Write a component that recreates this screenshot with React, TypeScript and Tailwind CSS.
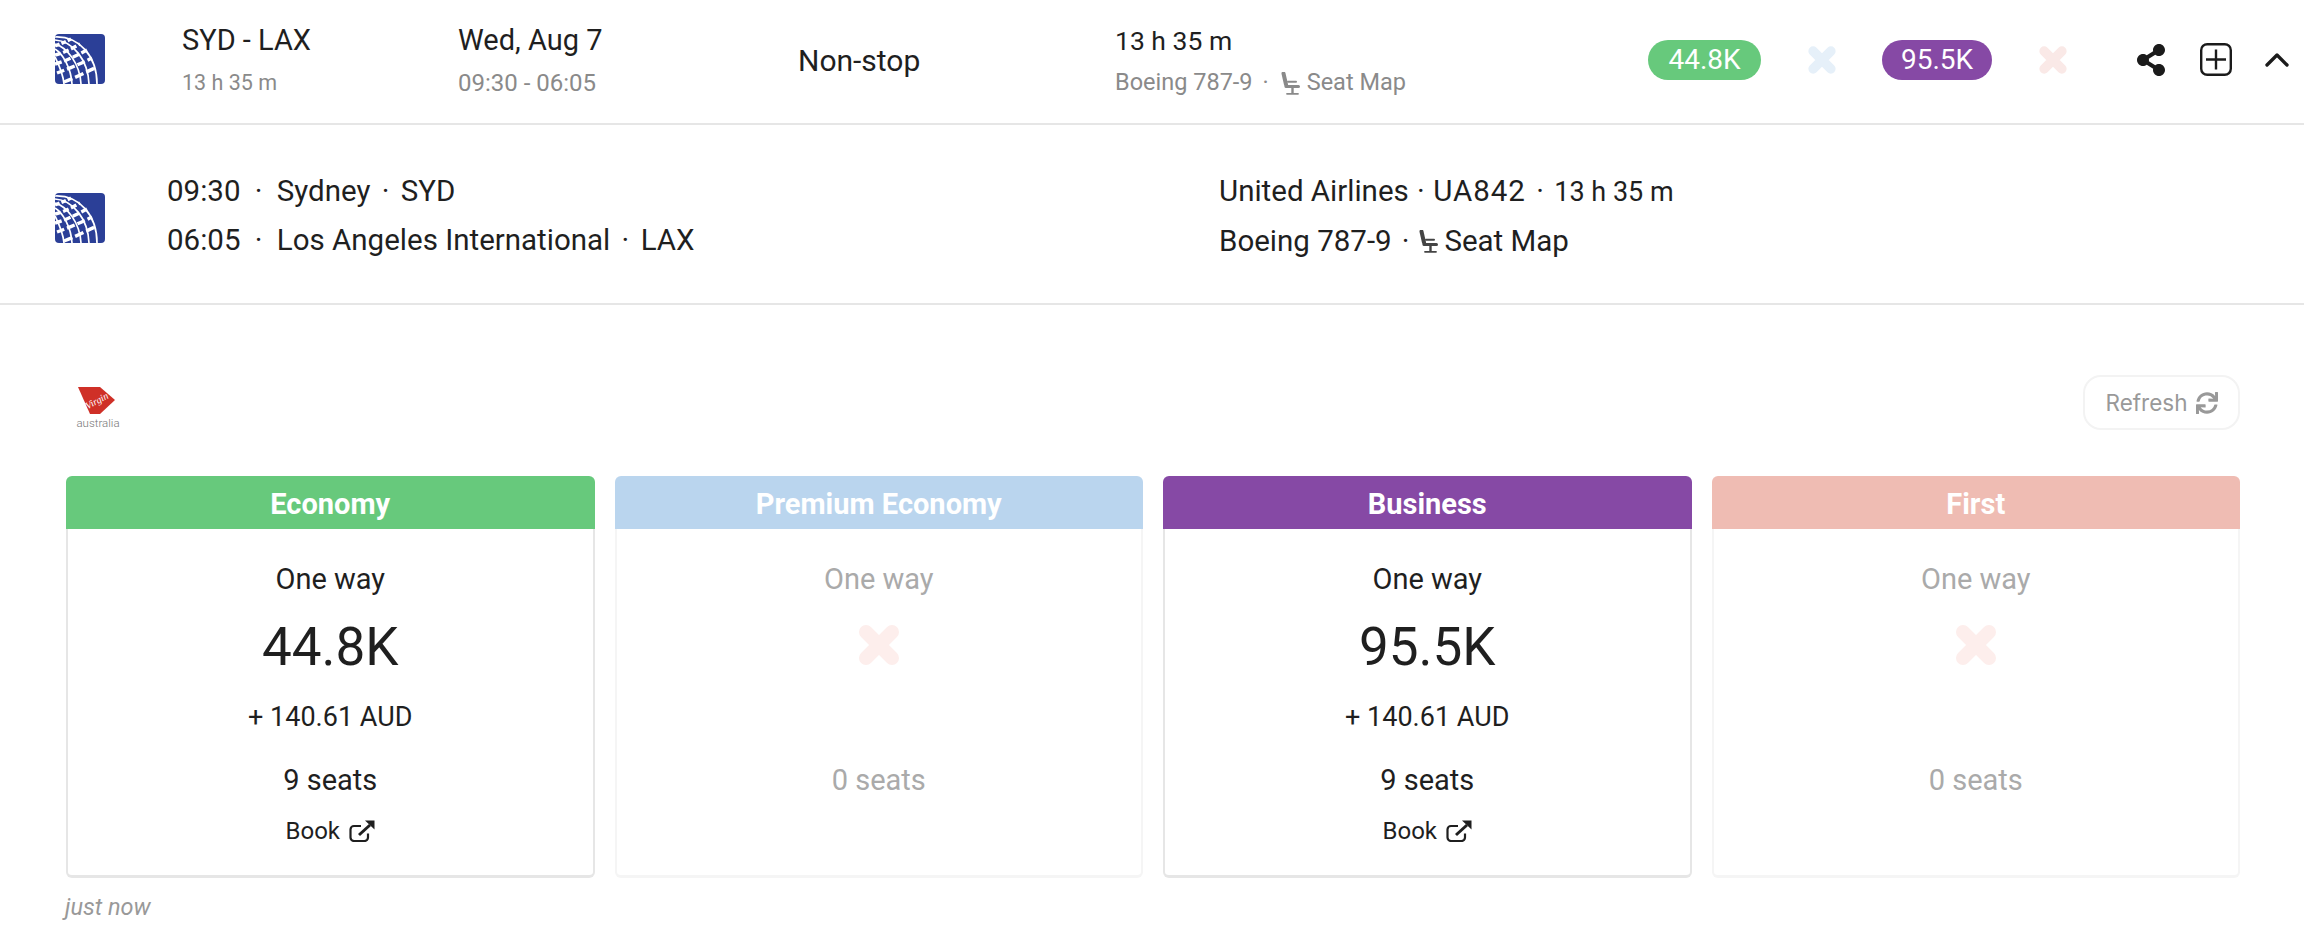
import React from "react";
import { FaShareAlt, FaSync } from "react-icons/fa";
import { FiChevronUp } from "react-icons/fi";

const font = "font-['Roboto',sans-serif]";

function UnitedLogo() {
  return (
    <svg width="50" height="50" viewBox="0 0 50 50" className="shrink-0">
      <defs>
        <clipPath id="ua"><rect width="50" height="50" rx="4" /></clipPath>
      </defs>
      <g clipPath="url(#ua)">
        <rect width="50" height="50" fill="#2b3f97" />
        <g fill="none" stroke="#fff" strokeWidth="1.7">
          <path d="M0 3C24 2 42 22 42 50" />
          <path d="M0 6C18 7 33 26 34 50" />
          <path d="M0 10C12 13 25 30 26 50" />
          <path d="M0 15C8 20 16 34 17 50" />
          <path d="M0 23C3 29 8 39 9 50" />
        </g>
        <g fill="none" stroke="#fff" strokeWidth="3.4">
          <path d="M0 12C5 10 10 8 16 5" strokeDasharray="5 2" />
          <path d="M0 21C9 19 18 14 25 10" strokeDasharray="6 2.5" />
          <path d="M0 30C11 27 23 21 32 16" strokeDasharray="7 2.5" />
          <path d="M2 39C13 35 27 29 37 24" strokeDasharray="8 3" />
          <path d="M9 48C20 44 31 38 40 34" strokeDasharray="9 3" />
        </g>
      </g>
    </svg>
  );
}

function VirginLogo() {
  return (
    <svg width="44" height="42" viewBox="0 0 44 42" className="block overflow-visible">
      <path d="M1 0H23L38 13L23 27H13Z" fill="#cf3027" />
      <text x="20" y="17" textAnchor="middle" fontFamily="'Liberation Serif',serif" fontStyle="italic" fontSize="10" fill="#fff" transform="rotate(-28 20 14)">Virgin</text>
      <text x="21" y="40" textAnchor="middle" fontFamily="'Roboto',sans-serif" fontWeight="300" fontSize="11.5" fill="#777">australia</text>
    </svg>
  );
}

function Seat({ className = "" }: { className?: string }) {
  return (
    <svg viewBox="0 0 19 23" className={className} fill="none" stroke="currentColor">
      <path d="M2.5 1.5L5 12.5" strokeWidth="4" strokeLinecap="round" />
      <path d="M5 14.5H17.5" strokeWidth="3" strokeLinecap="round" />
      <path d="M7 9.8H15" strokeWidth="2" strokeLinecap="round" />
      <path d="M11.5 15v6.5" strokeWidth="2.4" />
      <path d="M6 21.8H17" strokeWidth="1.8" strokeLinecap="round" />
    </svg>
  );
}

function ThickX({ className = "" }: { className?: string }) {
  return (
    <svg viewBox="0 0 44 44" className={className} fill="none" stroke="currentColor" strokeWidth="14" strokeLinecap="round">
      <path d="M9 9L35 35M35 9L9 35" />
    </svg>
  );
}

function ExternalIcon() {
  return (
    <svg width="26" height="22" viewBox="0 0 26 22" fill="none" stroke="currentColor" className="shrink-0">
      <path d="M19 13.5V17.5a3.5 3.5 0 0 1-3.5 3.5H5A3.5 3.5 0 0 1 1.5 17.5V9.5A3.5 3.5 0 0 1 5 6h7" strokeWidth="2.2" />
      <path d="M10 15L21 5" strokeWidth="3" />
      <path d="M16 0.5h9.5v9z" fill="currentColor" stroke="none" />
    </svg>
  );
}

function PlusBox() {
  return (
    <svg width="32" height="33" viewBox="0 0 32 33" fill="none" stroke="#1b1b1b" strokeWidth="2.4">
      <rect x="1.2" y="1.2" width="29.6" height="30.6" rx="6" />
      <path d="M6 16.5H26M16 6.5V26.5" />
    </svg>
  );
}

function Pill({ text, color, w }: { text: string; color: string; w: string }) {
  return (
    <div className={`${color} ${w} h-10 rounded-[20px] flex items-center justify-center text-white text-[28px]`}>{text}</div>
  );
}

function Card({
  title, header, value, price, seats, enabled,
}: { title: string; header: string; value?: string; price?: string; seats: string; enabled: boolean }) {
  return (
    <div className="flex flex-col h-[402px]">
      <div className={`${header} h-[53px] pt-[5px] rounded-t-[6px] flex items-center justify-center text-white text-[29px] font-bold`}>{title}</div>
      <div
        className={`flex-1 flex flex-col items-center border-x-2 border-b-[3px] rounded-b-[6px] ${enabled ? "border-[#e6e6e6] text-[#1f1f1f]" : "border-[#f5f5f5] text-[#aaaaaa]"}`}
      >
        <div className="h-[34px] mt-[34px] flex items-center text-[29px]">One way</div>
        {enabled ? (
          <>
            <div className="h-[60px] mt-[21px] flex items-center text-[53px]">{value}</div>
            <div className="h-[35px] mt-[22px] flex items-center text-[27px]">{price}</div>
          </>
        ) : (
          <div className="h-[118px] mt-[20px]">
            <ThickX className="text-[#fdeeec] w-[44px] h-[44px] mt-[6px]" />
          </div>
        )}
        <div className="h-[34px] mt-[29px] flex items-center text-[29px]">{seats}</div>
        {enabled && (
          <div className="h-[30px] mt-[18px] flex items-center gap-[9px] text-[24px]">
            Book <ExternalIcon />
          </div>
        )}
      </div>
    </div>
  );
}

export default function App() {
  return (
    <div className={`${font} w-[2304px] h-[938px] bg-white text-[#1f1f1f] overflow-hidden`}>
      <div className="h-[125px] border-b-2 border-[#e6e6e6] flex items-start">
        <div className="w-[182px] pl-[55px] pt-[34px] shrink-0"><UnitedLogo /></div>
        <div className="w-[276px] shrink-0 pt-[24px]">
          <div className="h-[34px] flex items-center text-[29px]">SYD - LAX</div>
          <div className="h-[30px] mt-[10px] flex items-center text-[21.5px] text-[#8a8a8a]">13 h 35 m</div>
        </div>
        <div className="w-[340px] shrink-0 pt-[24px]">
          <div className="h-[34px] flex items-center text-[29px]">Wed, Aug 7</div>
          <div className="h-[30px] mt-[10px] flex items-center text-[24px] text-[#8a8a8a]">09:30 - 06:05</div>
        </div>
        <div className="w-[317px] shrink-0 pt-[43px]">
          <div className="h-[34px] flex items-center text-[30px]">Non-stop</div>
        </div>
        <div className="w-[533px] shrink-0 pt-[24px]">
          <div className="h-[34px] flex items-center text-[26.5px]">13 h 35 m</div>
          <div className="h-[30px] mt-[10px] flex items-center text-[23.5px] text-[#8a8a8a]">
            Boeing 787-9 <span className="mx-[10px]">·</span> <Seat className="w-[19px] h-[23px] ml-[2px] mr-[7px]" /> Seat Map
          </div>
        </div>
        <div className="flex items-center h-[120px] pb-[1px]">
          <Pill text="44.8K" color="bg-[#67c97c]" w="w-[113px]" />
          <ThickX className="text-[#e6f0f9] w-[30px] h-[30px] ml-[46px]" />
          <div className="ml-[45px]"><Pill text="95.5K" color="bg-[#8649a5]" w="w-[110px]" /></div>
          <ThickX className="text-[#fae9e7] w-[30px] h-[30px] ml-[46px]" />
          <FaShareAlt className="text-[#1b1b1b] w-[30px] h-[32px] ml-[68px]" />
          <div className="ml-[34px]"><PlusBox /></div>
          <FiChevronUp className="text-[#1b1b1b] w-[40px] h-[40px] ml-[25px]" />
        </div>
      </div>

      <div className="h-[180px] border-b-2 border-[#e6e6e6] flex items-start">
        <div className="w-[167px] pl-[55px] pt-[68px] shrink-0"><UnitedLogo /></div>
        <div className="w-[1052px] shrink-0 pt-[49px] text-[29.5px] leading-[34px]">
          <div>09:30 <span className="mx-[7px]">·</span> Sydney <span className="mx-[4px]">·</span> SYD</div>
          <div className="mt-[15px]">06:05 <span className="mx-[7px]">·</span> Los Angeles International <span className="mx-[4px]">·</span> LAX</div>
        </div>
        <div className="pt-[49px] text-[29.5px] leading-[34px]">
          <div>United Airlines <span className="mx-[1px]">·</span> <span className="tracking-[1px]">UA842</span> <span className="mx-[3px]">·</span> <span className="text-[27px]">13 h 35 m</span></div>
          <div className="mt-[15px] flex items-center">
            Boeing 787-9 <span className="mx-[10px]">·</span>
            <Seat className="w-[19px] h-[23px] mr-[6px] text-[#444]" /> Seat Map
          </div>
        </div>
      </div>

      <div className="pl-[66px] pr-[64px]">
        <div className="h-[171px] flex items-start justify-between">
          <div className="pt-[82px] pl-[11px]"><VirginLogo /></div>
          <div className="mt-[70px] w-[157px] h-[55px] rounded-[18px] border-2 border-[#f3f3f3] flex items-center justify-center gap-[8px] text-[#999999] text-[22.5px] font-['Inter',sans-serif]">
            Refresh <FaSync className="w-[22px] h-[22px]" />
          </div>
        </div>
        <div className="grid grid-cols-4 gap-5">
          <Card title="Economy" header="bg-[#67c97c]" value="44.8K" price="+ 140.61 AUD" seats="9 seats" enabled />
          <Card title="Premium Economy" header="bg-[#bad5ee]" seats="0 seats" enabled={false} />
          <Card title="Business" header="bg-[#8649a5]" value="95.5K" price="+ 140.61 AUD" seats="9 seats" enabled />
          <Card title="First" header="bg-[#efbcb3]" seats="0 seats" enabled={false} />
        </div>
        <div className="mt-[12px] text-[23.5px] italic text-[#999999] -ml-[1px]">just now</div>
      </div>
    </div>
  );
}
